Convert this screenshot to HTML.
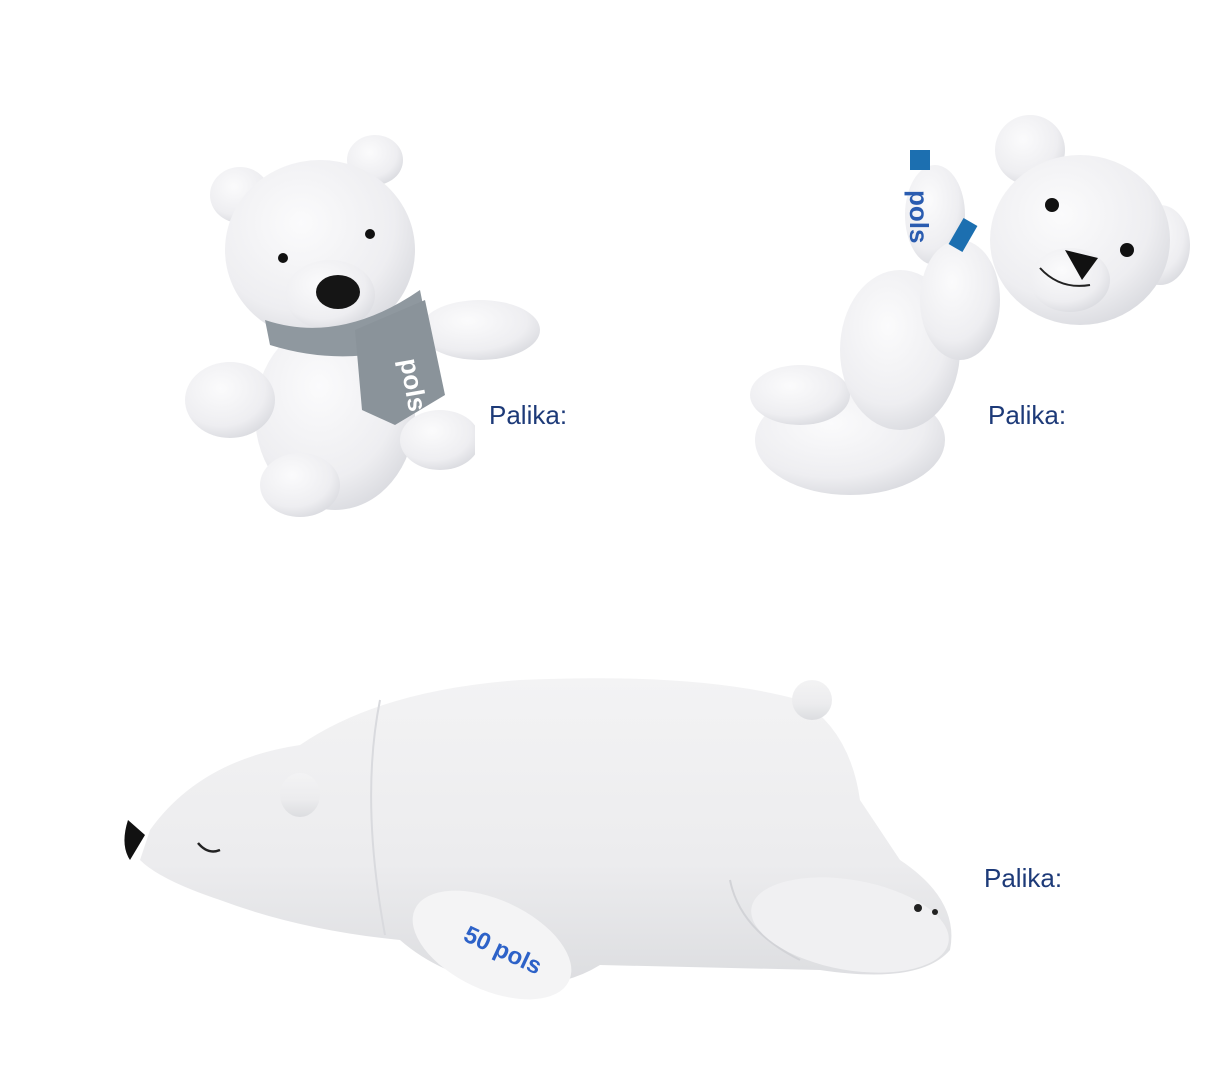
<!DOCTYPE html>
<html><head><meta charset="utf-8"><style>
html,body{margin:0;padding:0;background:#fff;width:1230px;height:1078px;overflow:hidden;position:relative}
.t{position:absolute;font-family:"Liberation Sans",sans-serif;font-size:26px;color:#1d3a78;line-height:1}
svg{position:absolute;left:0;top:0}
</style></head><body>
<svg width="1230" height="1078" viewBox="0 0 1230 1078">
<defs>
<radialGradient id="g" cx="40%" cy="35%" r="70%"><stop offset="0" stop-color="#fbfbfc"/><stop offset="0.7" stop-color="#eeeef1"/><stop offset="1" stop-color="#d9dadf"/></radialGradient>
<linearGradient id="lb" x1="0" y1="0" x2="0" y2="1"><stop offset="0" stop-color="#f3f3f4"/><stop offset="0.6" stop-color="#ececee"/><stop offset="1" stop-color="#dcdde0"/></linearGradient>
</defs>
<!-- bear 1 -->
<g fill="url(#g)">
<ellipse cx="335" cy="415" rx="80" ry="95"/>
<ellipse cx="230" cy="400" rx="45" ry="38"/>
<ellipse cx="480" cy="330" rx="60" ry="30"/>
<ellipse cx="300" cy="485" rx="40" ry="32"/>
<ellipse cx="440" cy="440" rx="40" ry="30"/>
<ellipse cx="240" cy="195" rx="30" ry="28"/>
<ellipse cx="375" cy="160" rx="28" ry="25"/>
<ellipse cx="320" cy="250" rx="95" ry="90"/>
<ellipse cx="330" cy="295" rx="45" ry="35"/>
</g>
<path d="M265 320 Q340 345 420 290 L430 340 Q350 370 270 345Z" fill="#8f989f"/>
<path d="M355 330 L425 300 L445 395 L395 425 L362 410Z" fill="#8a939a"/>
<text x="400" y="360" font-family="Liberation Sans" font-weight="bold" font-size="26" fill="#fff" transform="rotate(80 400 360)">pols</text>
<ellipse cx="338" cy="292" rx="22" ry="17" fill="#151515"/>
<circle cx="283" cy="258" r="5" fill="#111"/><circle cx="370" cy="234" r="5" fill="#111"/>
<rect x="475" y="380" width="160" height="90" fill="#fff"/>
<!-- bear 2 -->
<g fill="url(#g)">
<ellipse cx="850" cy="440" rx="95" ry="55"/>
<ellipse cx="800" cy="395" rx="50" ry="30"/>
<ellipse cx="900" cy="350" rx="60" ry="80"/>
<ellipse cx="935" cy="215" rx="30" ry="50"/>
<ellipse cx="960" cy="300" rx="40" ry="60"/>
<ellipse cx="1030" cy="150" rx="35" ry="35"/>
<ellipse cx="1160" cy="245" rx="30" ry="40"/>
<ellipse cx="1080" cy="240" rx="90" ry="85"/>
<ellipse cx="1070" cy="280" rx="40" ry="32"/>
</g>
<rect x="910" y="150" width="20" height="20" fill="#1c6fb0"/>
<rect x="955" y="220" width="16" height="30" fill="#1c6fb0" transform="rotate(30 963 235)"/>
<text x="910" y="190" font-family="Liberation Sans" font-weight="bold" font-size="26" fill="#2a5cb0" transform="rotate(90 910 190)">pols</text>
<path d="M1065 250 L1098 258 L1082 280Z" fill="#111"/>
<circle cx="1052" cy="205" r="7" fill="#111"/><circle cx="1127" cy="250" r="7" fill="#111"/>
<path d="M1040 268 Q1060 290 1090 285" stroke="#222" stroke-width="2" fill="none"/>
<rect x="975" y="383" width="120" height="70" fill="#fff"/>
<!-- bear 3 -->
<g fill="url(#lb)">
<path d="M150 830 Q200 760 300 745 Q380 690 520 680 Q700 672 800 700 Q850 730 860 800 L900 860 Q960 900 950 950 Q920 985 820 970 L600 965 Q560 990 500 985 Q440 975 400 940 Q300 930 220 900 Q160 880 140 860Z"/>
<circle cx="812" cy="700" r="20"/>
<ellipse cx="300" cy="795" rx="20" ry="22"/>
</g>
<path d="M380 700 Q360 800 385 935" stroke="#d9dade" stroke-width="2" fill="none"/>
<path d="M730 880 Q740 930 800 960" stroke="#d2d3d7" stroke-width="2" fill="none"/>
<ellipse cx="492" cy="945" rx="85" ry="45" fill="#f4f4f5" transform="rotate(25 492 945)"/>
<ellipse cx="850" cy="925" rx="100" ry="45" fill="#f0f0f2" transform="rotate(10 850 925)"/>
<path d="M128 820 Q120 845 130 860 L145 835Z" fill="#111"/>
<path d="M198 843 Q208 855 220 850" stroke="#222" stroke-width="2.5" fill="none"/>
<text x="462" y="940" font-family="Liberation Sans" font-weight="bold" font-size="24" fill="#2d62c8" transform="rotate(25 462 940)">50 pols</text>
<circle cx="918" cy="908" r="4" fill="#222"/><circle cx="935" cy="912" r="3" fill="#222"/>
</svg>
<div class="t" style="left:489px;top:402px">Palika:</div>
<div class="t" style="left:988px;top:402px">Palika:</div>
<div class="t" style="left:984px;top:865px">Palika:</div>
</body></html>
